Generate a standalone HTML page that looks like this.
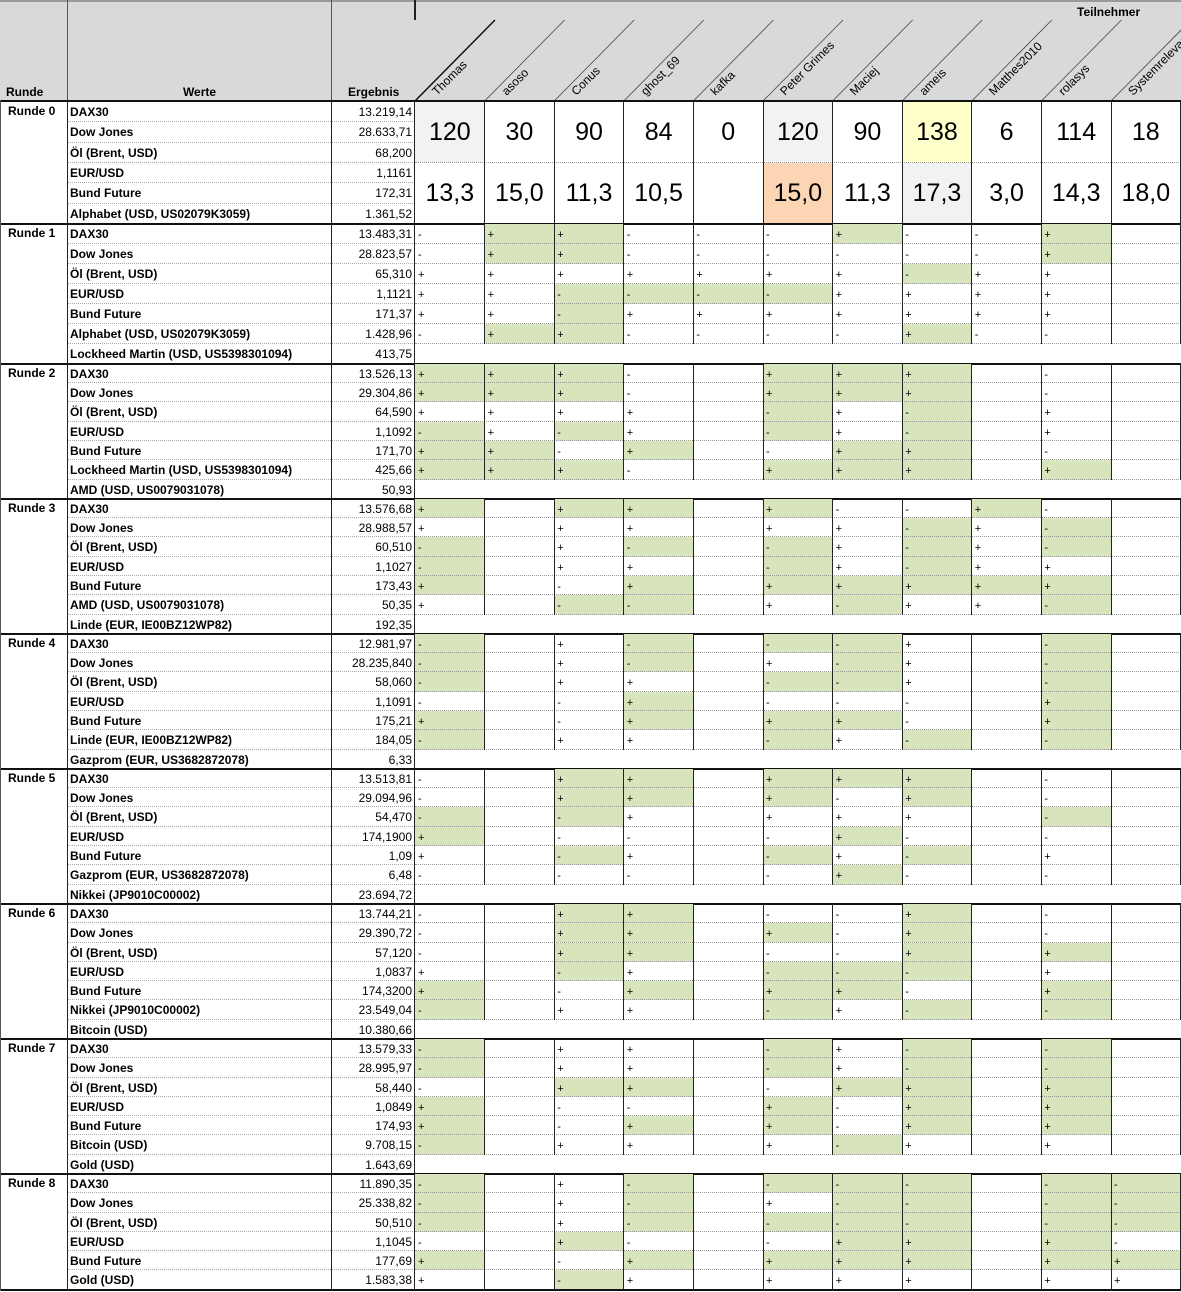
<!DOCTYPE html>
<html><head><meta charset="utf-8">
<style>
body{margin:0;width:1181px;height:1291px;overflow:hidden;background:#fff;font-family:"Liberation Sans",Arial,sans-serif;position:relative}
.a{position:absolute;box-sizing:border-box}
.t{font-size:12px;line-height:1;white-space:nowrap}
.b{font-weight:bold}
.s{font-size:11px;padding-left:3px;white-space:nowrap}
.big{font-size:25px;text-align:center}
</style></head><body>
<div id="root"></div>
<script>
var H='';
function d(x,y,w,h,st,txt,cls){H+='<div class="a '+(cls||'')+'" style="left:'+x+'px;top:'+y+'px;width:'+w+'px;height:'+h+'px;'+(st||'')+'">'+(txt||'')+'</div>';}
d(0,0,1181,101,'background:#d9d9d9;');
d(0,0,1181,2,'background:#9a9a9a;');
d(67,0,1,101,'background:#555;');
d(331,0,1,101,'background:#555;');
d(414,0,2,20,'background:#222;');
d(6,86,60,14,'','Runde','t b');
d(68,86,263,14,'text-align:center','Werte','t b');
d(348,86,60,14,'','Ergebnis','t b');
d(1077,6,80,14,'','Teilnehmer','t b');
var names=['Thomas','asoso','Conus','ghost_69','kafka','Peter Grimes','Maciej','ameis','Matthes2010','rolasys','Systemrelevant'];
var W=69.6,X0=415;
var svg='<svg class="a" style="left:0;top:0" width="1181" height="101">';
for(var i=0;i<12;i++){var x=X0+i*W;svg+='<line x1="'+x+'" y1="101" x2="'+(x+80)+'" y2="20" stroke="'+(i==0?'#111':'#444')+'" stroke-width="'+(i==0?1.5:0.8)+'"/>';}
for(var i=0;i<11;i++){var x=X0+i*W+22;svg+='<text x="'+x+'" y="96" font-family="Liberation Sans,Arial,sans-serif" font-size="12" fill="#000" transform="rotate(-45 '+x+' 96)">'+names[i]+'</text>';}
svg+='</svg>';
H+=svg;
d(0,100,1181,2,'background:#111;');
var secs=[
[['DAX30','13.219,14'],['Dow Jones','28.633,71'],['Öl (Brent, USD)','68,200'],['EUR/USD','1,1161'],['Bund Future','172,31'],['Alphabet (USD, US02079K3059)','1.361,52']],
[['DAX30','13.483,31'],['Dow Jones','28.823,57'],['Öl (Brent, USD)','65,310'],['EUR/USD','1,1121'],['Bund Future','171,37'],['Alphabet (USD, US02079K3059)','1.428,96'],['Lockheed Martin (USD, US5398301094)','413,75']],
[['DAX30','13.526,13'],['Dow Jones','29.304,86'],['Öl (Brent, USD)','64,590'],['EUR/USD','1,1092'],['Bund Future','171,70'],['Lockheed Martin (USD, US5398301094)','425,66'],['AMD (USD, US0079031078)','50,93']],
[['DAX30','13.576,68'],['Dow Jones','28.988,57'],['Öl (Brent, USD)','60,510'],['EUR/USD','1,1027'],['Bund Future','173,43'],['AMD (USD, US0079031078)','50,35'],['Linde (EUR, IE00BZ12WP82)','192,35']],
[['DAX30','12.981,97'],['Dow Jones','28.235,840'],['Öl (Brent, USD)','58,060'],['EUR/USD','1,1091'],['Bund Future','175,21'],['Linde (EUR, IE00BZ12WP82)','184,05'],['Gazprom (EUR, US3682872078)','6,33']],
[['DAX30','13.513,81'],['Dow Jones','29.094,96'],['Öl (Brent, USD)','54,470'],['EUR/USD','174,1900'],['Bund Future','1,09'],['Gazprom (EUR, US3682872078)','6,48'],['Nikkei (JP9010C00002)','23.694,72']],
[['DAX30','13.744,21'],['Dow Jones','29.390,72'],['Öl (Brent, USD)','57,120'],['EUR/USD','1,0837'],['Bund Future','174,3200'],['Nikkei (JP9010C00002)','23.549,04'],['Bitcoin (USD)','10.380,66']],
[['DAX30','13.579,33'],['Dow Jones','28.995,97'],['Öl (Brent, USD)','58,440'],['EUR/USD','1,0849'],['Bund Future','174,93'],['Bitcoin (USD)','9.708,15'],['Gold (USD)','1.643,69']],
[['DAX30','11.890,35'],['Dow Jones','25.338,82'],['Öl (Brent, USD)','50,510'],['EUR/USD','1,1045'],['Bund Future','177,69'],['Gold (USD)','1.583,38']]
];
var G=[null,
['mPPmmmPmmP.','mPPmmmmmmP.','pppppppMpp.','ppMMMMpppp.','ppMppppppp.','mPPmmmmPmm.'],
['PPPm.PPP.m.','PPPm.PPP.m.','pppp.MpM.p.','MpMp.MpM.p.','PPmP.mPP.m.','PPPm.PPP.P.'],
['P.PP.PmmPm.','p.pp.ppMpM.','M.pM.MpMpM.','M.pp.MpMpp.','P.mP.PPPPP.','p.MM.pMppM.'],
['M.pM.MMp.M.','M.pM.pMp.M.','M.pp.MMp.M.','m.mP.mmm.P.','P.mP.PPm.P.','M.pp.MpM.M.'],
['m.PP.PPP.m.','m.PP.PmP.m.','M.Mp.ppp.M.','P.mm.mPm.m.','p.Mp.MpM.p.','m.mm.mPm.m.'],
['m.PP.mmP.m.','m.PP.PmP.m.','m.PP.mmP.P.','p.Mp.MMM.p.','P.mP.PPm.P.','M.pp.MpM.M.'],
['M.pp.MpM.M.','M.pp.MpM.M.','m.PP.mPP.P.','P.mm.PmP.P.','P.mP.PmP.P.','M.pp.pMp.p.'],
['M.pM.MMM.MM','M.pM.pMM.MM','M.pM.MMM.MM','m.Pm.mPP.Pm','P.mP.PPP.PP','p.Mp.ppp.pp']
];
var yy=102;
for(var s=0;s<9;s++){
 var rows=secs[s];var rh=(s==0)?20.3:(s==1)?20:19.29;var n=rows.length;var ty=yy;
 d(8,ty+3,60,14,'','Runde '+s,'t b');
 for(var r=0;r<n;r++){
  var ry=ty+r*rh;
  d(70,ry+4,260,14,'',rows[r][0],'t b');
  d(332,ry+4,80,14,'text-align:right',rows[r][1],'t');
  if(r<n-1) d(67,ry+rh-1,348,1,'border-bottom:1px dotted #aaa;');
  if(s>0 && r<6){
   var g=G[s][r];
   for(var c=0;c<11;c++){
    var ch=g.charAt(c);var x=X0+c*W;
    var bg=(ch=='P'||ch=='M')?'background:#d8e4bc;':'';
    var tx=(ch=='P'||ch=='p')?'+':(ch=='M'||ch=='m')?'-':'';
    d(x,ry,W,rh,bg+'line-height:'+rh+'px;','<span class="s">'+tx+'</span>','');
   }
   d(X0,ry+rh-1,766,1,'border-bottom:1px dotted #999;');
  }
 }
 var hh=n*rh;
 if(s==0){
  var r1=['120','30','90','84','0','120','90','138','6','114','18'];
  var r2=['13,3','15,0','11,3','10,5','','15,0','11,3','17,3','3,0','14,3','18,0'];
  var bg1={0:'#f2f2f2',5:'#f2f2f2',7:'#ffffcc'},bg2={5:'#fcd5b4',7:'#f2f2f2'};
  var hb=3*rh;
  for(var c=0;c<11;c++){var x=X0+c*W;
   d(x,ty,W,hb,'line-height:'+hb+'px;'+(bg1[c]?'background:'+bg1[c]+';':''),r1[c],'big');
   d(x,ty+hb,W,hb,'line-height:'+hb+'px;'+(bg2[c]?'background:'+bg2[c]+';':''),r2[c],'big');
  }
  d(X0,ty+hb-1,766,1,'border-bottom:1px dotted #999;');
 }
 var vh=(s==0)?hh:6*rh;
 for(var c=1;c<12;c++){d(X0+c*W-0.5,ty,1,vh,'background:#222;');}
 d(67,ty,1,hh,'background:#222;');
 d(331,ty,1,hh,'background:#222;');
 d(414,ty,1,hh,'background:#222;');
 yy=ty+hh;
 d(0,yy-1,1181,2,'background:#111;');
}
d(0,100,1,1191,'background:#555;');
document.getElementById('root').innerHTML=H;
</script>
</body></html>
